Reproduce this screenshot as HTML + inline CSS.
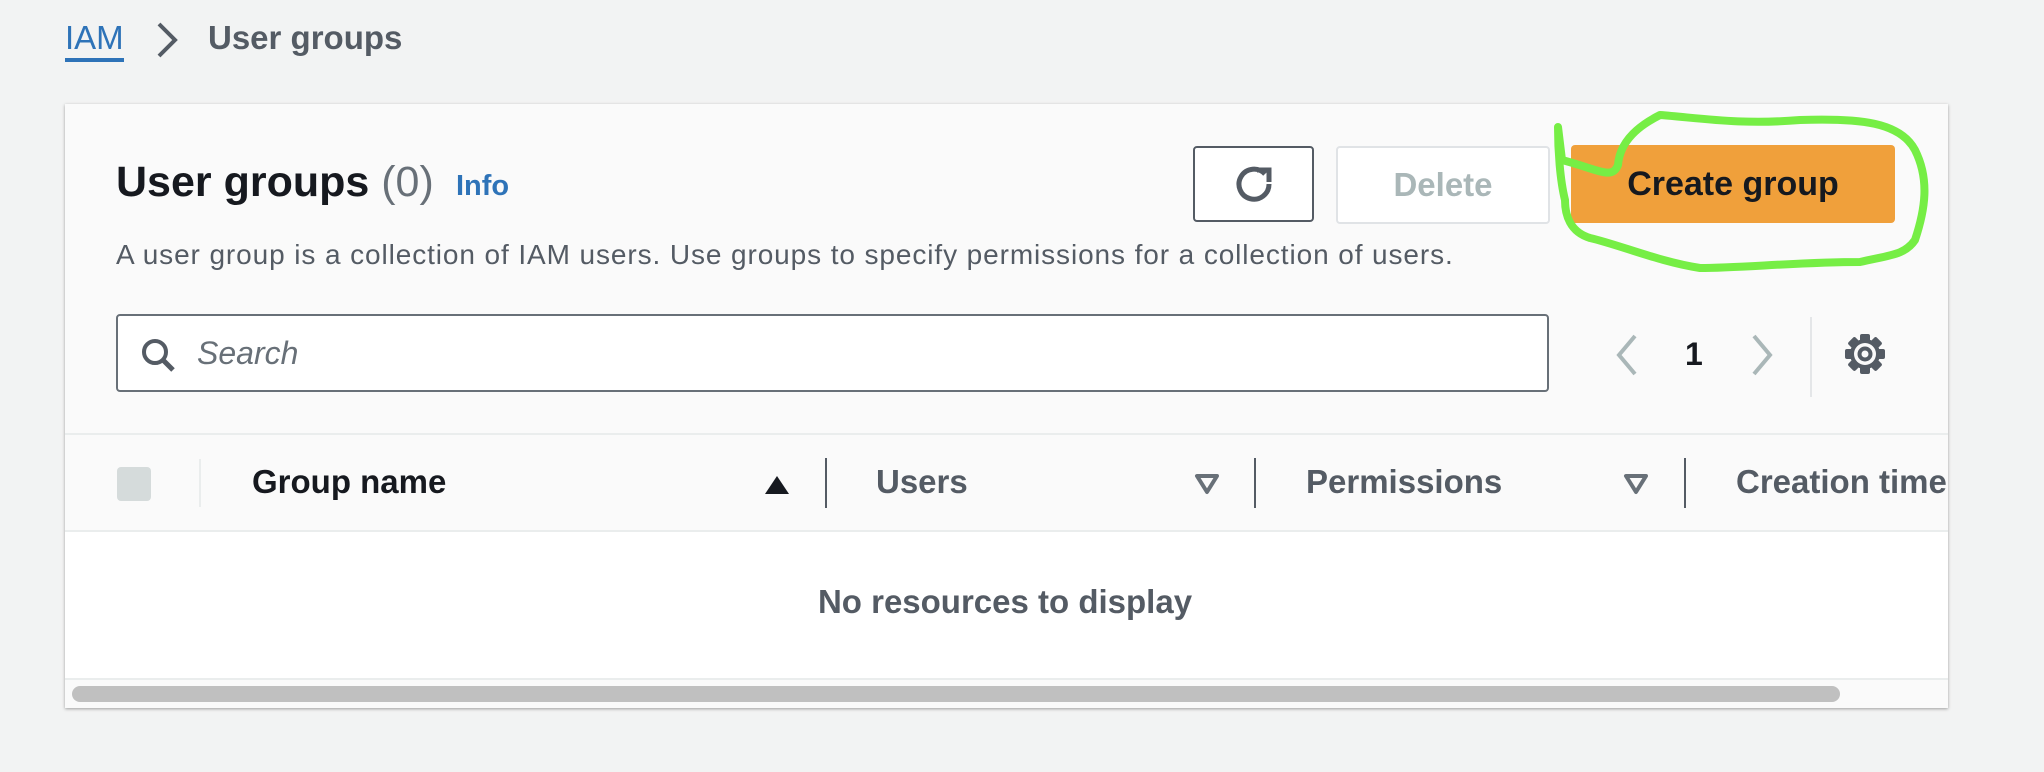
<!DOCTYPE html>
<html><head><meta charset="utf-8"><style>
*{margin:0;padding:0;box-sizing:border-box}
body{width:2044px;height:772px;background:#f2f3f3;font-family:"Liberation Sans",sans-serif;position:relative;overflow:hidden;color:#16191f}
.a{position:absolute;white-space:nowrap}
.card{position:absolute;left:65px;top:104px;width:1883px;height:604px;background:#fafafa;box-shadow:0 1px 3px rgba(0,0,0,.35);overflow:hidden}
.btn{position:absolute;border-radius:4px;display:flex;align-items:center;justify-content:center;font-weight:bold;font-size:33px}
.vd{position:absolute;width:2px;background:#545b64}
.h{font-size:33px;font-weight:bold;top:359px}
</style></head><body>
<div class="a" style="left:65px;top:18px;font-size:33px;color:#2e73b8;border-bottom:4px solid #2e73b8;line-height:40px">IAM</div>
<svg class="a" style="left:153px;top:20px" width="30" height="40"><path d="M6 4 L22 20 L6 36" stroke="#545b64" stroke-width="4" fill="none"/></svg>
<div class="a" style="left:208px;top:18px;font-size:33px;color:#545b64;font-weight:bold;line-height:40px">User groups</div>

<div class="card">
  <div class="a" style="left:51px;top:52px;font-size:43px;font-weight:bold;line-height:52px">User groups <span style="font-weight:normal;color:#687078">(0)</span></div>
  <div class="a" style="left:391px;top:66px;font-size:29px;font-weight:bold;color:#2e73b8">Info</div>
  <div class="a" style="left:51px;top:135px;font-size:28px;letter-spacing:0.9px;color:#545b64">A user group is a collection of IAM users. Use groups to specify permissions for a collection of users.</div>

  <div class="btn" style="left:1128px;top:42px;width:121px;height:76px;border:2px solid #545b64;background:#fff">
    <svg width="44" height="44" viewBox="0 0 44 44"><path d="M33 12 A15 15 0 1 0 37 22" stroke="#545b64" stroke-width="5" fill="none"/><path d="M25 8 H37 V20" stroke="#545b64" stroke-width="5" fill="none"/></svg>
  </div>
  <div class="btn" style="left:1271px;top:42px;width:214px;height:78px;border:2px solid #e0e3e6;background:#fff;color:#aab7b8">Delete</div>
  <div class="btn" style="left:1506px;top:41px;width:324px;height:78px;background:#f0a03b;color:#16191f;font-size:34px">Create group</div>

  <div class="a" style="left:51px;top:210px;width:1433px;height:78px;border:2px solid #687078;border-radius:4px;background:#fff"></div>
  <svg class="a" style="left:74px;top:232px" width="40" height="40"><circle cx="16" cy="16" r="11" stroke="#545b64" stroke-width="4" fill="none"/><path d="M24 24 L34 34" stroke="#545b64" stroke-width="5"/></svg>
  <div class="a" style="left:132px;top:231px;font-size:32px;font-style:italic;color:#687078">Search</div>

  <svg class="a" style="left:1548px;top:228px" width="30" height="46"><path d="M22 4 L6 23 L22 42" stroke="#aab7b8" stroke-width="4" fill="none"/></svg>
  <div class="a" style="left:1620px;top:232px;font-size:32px;font-weight:bold">1</div>
  <svg class="a" style="left:1683px;top:228px" width="30" height="46"><path d="M6 4 L22 23 L6 42" stroke="#aab7b8" stroke-width="4" fill="none"/></svg>
  <div class="a" style="left:1745px;top:213px;width:2px;height:80px;background:#e4e6e8"></div>
  <svg class="a" style="left:1776px;top:226px" width="48" height="48" viewBox="0 0 48 48"><g fill="#545b64"><circle cx="24" cy="24" r="15"/><g><rect x="19" y="4" width="10" height="10" rx="2"/><rect x="19" y="34" width="10" height="10" rx="2"/><rect x="4" y="19" width="10" height="10" rx="2"/><rect x="34" y="19" width="10" height="10" rx="2"/></g><g transform="rotate(45 24 24)"><rect x="19" y="4" width="10" height="10" rx="2"/><rect x="19" y="34" width="10" height="10" rx="2"/><rect x="4" y="19" width="10" height="10" rx="2"/><rect x="34" y="19" width="10" height="10" rx="2"/></g></g><circle cx="24" cy="24" r="11" fill="#fafafa"/><circle cx="24" cy="24" r="5.5" fill="none" stroke="#545b64" stroke-width="4"/></svg>

  <div class="a" style="left:0;top:329px;width:1883px;height:2px;background:#eaeded"></div>
  <div class="a" style="left:52px;top:363px;width:34px;height:34px;border-radius:4px;background:#d5dbdb"></div>
  <div class="a" style="left:134px;top:355px;width:2px;height:48px;background:#eaeded"></div>
  <div class="a h" style="left:187px">Group name</div>
  <svg class="a" style="left:698px;top:368px" width="28" height="24"><path d="M2 22 L14 4 L26 22Z" fill="#16191f"/></svg>
  <div class="vd" style="left:760px;top:354px;height:50px"></div>
  <div class="a h" style="left:811px;color:#545b64">Users</div>
  <svg class="a" style="left:1128px;top:368px" width="28" height="24"><path d="M4 4 L24 4 L14 20Z" fill="none" stroke="#687078" stroke-width="4" stroke-linejoin="round"/></svg>
  <div class="vd" style="left:1189px;top:354px;height:50px"></div>
  <div class="a h" style="left:1241px;color:#545b64">Permissions</div>
  <svg class="a" style="left:1557px;top:368px" width="28" height="24"><path d="M4 4 L24 4 L14 20Z" fill="none" stroke="#687078" stroke-width="4" stroke-linejoin="round"/></svg>
  <div class="vd" style="left:1619px;top:354px;height:50px"></div>
  <div class="a h" style="left:1671px;color:#545b64">Creation time</div>
  <div class="a" style="left:0;top:426px;width:1883px;height:2px;background:#eaeded"></div>
  <div class="a" style="left:0;top:428px;width:1883px;height:148px;background:#fff"></div>
  <div class="a" style="left:0;top:574px;width:1883px;height:2px;background:#eaeded"></div>
  <div class="a" style="left:0;top:479px;width:1880px;text-align:center;font-size:33px;font-weight:bold;color:#545b64">No resources to display</div>
  <div class="a" style="left:7px;top:582px;width:1768px;height:16px;border-radius:8px;background:#c0c0c0"></div>
</div>

<svg class="a" style="left:0;top:0" width="2044" height="772"><path d="M1558 127 L1562 160 C1600 170 1612 180 1618 165 C1620 140 1640 125 1660 115 C1700 118 1740 125 1800 120 C1860 118 1900 122 1915 150 C1930 180 1925 210 1915 240 C1905 255 1890 255 1860 262 C1800 262 1740 268 1700 268 C1660 262 1620 245 1590 238 C1570 232 1565 215 1565 200 C1560 180 1558 150 1558 127Z" stroke="#76ee45" stroke-width="8" fill="none" stroke-linejoin="round"/></svg>
</body></html>
